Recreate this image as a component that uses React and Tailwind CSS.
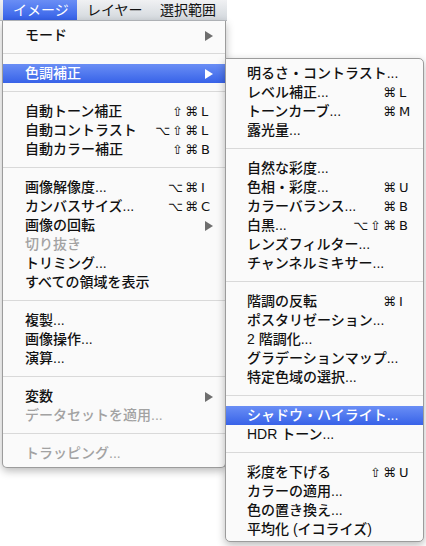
import React from "react";

const SEP = { sep: true };

const mainItems = [
  { l: "モード", arrow: true },
  SEP,
  { l: "色調補正", arrow: true, active: true },
  SEP,
  { l: "自動トーン補正", m: "⇧⌘", k: "L" },
  { l: "自動コントラスト", m: "⌥⇧⌘", k: "L" },
  { l: "自動カラー補正", m: "⇧⌘", k: "B" },
  SEP,
  { l: "画像解像度...", m: "⌥⌘", k: "I" },
  { l: "カンバスサイズ...", m: "⌥⌘", k: "C" },
  { l: "画像の回転", arrow: true },
  { l: "切り抜き", disabled: true },
  { l: "トリミング..." },
  { l: "すべての領域を表示" },
  SEP,
  { l: "複製..." },
  { l: "画像操作..." },
  { l: "演算..." },
  SEP,
  { l: "変数", arrow: true },
  { l: "データセットを適用...", disabled: true },
  SEP,
  { l: "トラッピング...", disabled: true },
];

const subItems = [
  { l: "明るさ・コントラスト..." },
  { l: "レベル補正...", m: "⌘", k: "L" },
  { l: "トーンカーブ...", m: "⌘", k: "M" },
  { l: "露光量..." },
  SEP,
  { l: "自然な彩度..." },
  { l: "色相・彩度...", m: "⌘", k: "U" },
  { l: "カラーバランス...", m: "⌘", k: "B" },
  { l: "白黒...", m: "⌥⇧⌘", k: "B" },
  { l: "レンズフィルター..." },
  { l: "チャンネルミキサー..." },
  SEP,
  { l: "階調の反転", m: "⌘", k: "I" },
  { l: "ポスタリゼーション..." },
  { l: "2 階調化..." },
  { l: "グラデーションマップ..." },
  { l: "特定色域の選択..." },
  SEP,
  { l: "シャドウ・ハイライト...", active: true },
  { l: "HDR トーン..." },
  SEP,
  { l: "彩度を下げる", m: "⇧⌘", k: "U" },
  { l: "カラーの適用..." },
  { l: "色の置き換え..." },
  { l: "平均化 (イコライズ)" },
];

function Row({ item, pl }) {
  if (item.sep) {
    return (
      <div className="h-[19px] flex flex-col">
        <div className="mt-[8px] h-px bg-[#d9d9d9]" />
      </div>
    );
  }
  const { l, m, k, arrow, disabled, active } = item;
  const color = active
    ? "bg-linear-to-b from-[#6a8ef5] to-[#3862e8] text-white"
    : disabled
    ? "text-[#a2a2a2]"
    : "text-[#111111]";
  return (
    <div className={`flex items-center h-[19px] pr-[12px] ${pl} ${color}`}>
      <span className="flex-1 whitespace-nowrap text-[14px] leading-[19px] font-medium">{l}</span>
      {k && (
        <span className="flex items-center font-['DejaVu_Sans',sans-serif] text-[13px] leading-[19px] font-medium">
          <span className="tracking-[2px] mr-[1px]">{m}</span>
          <span className="w-[12px]">{k}</span>
        </span>
      )}
      {arrow && (
        <svg width="8" height="10" viewBox="0 0 8 10">
          <path d="M0 0 L8 5 L0 10 Z" fill={active ? "#ffffff" : "#6e6e6e"} />
        </svg>
      )}
    </div>
  );
}

export default function App() {
  return (
    <div className="relative w-[426px] h-[546px] bg-white overflow-hidden font-['Liberation_Sans','Noto_Sans_CJK_JP',sans-serif]">
      <div className="flex w-[227px] h-[21px] bg-linear-to-b from-[#f0f1f3] to-[#d3d8dd] border-b border-[#b9bcc0] text-[14px] text-[#111]">
        <div className="w-[3px]" />
        <div className="w-[74px] pl-[10px] leading-[20px] text-white bg-linear-to-b from-[#6a8ef5] to-[#3560e8]">
          イメージ
        </div>
        <div className="w-[73px] pl-[10px] leading-[20px]">レイヤー</div>
        <div className="w-[76px] pl-[10px] leading-[20px]">選択範囲</div>
      </div>

      <div className="absolute left-[2px] top-[21px] w-[224px] pt-[5px] pb-[4px] bg-[#fafafa] border-x border-b border-[#9c9c9c] rounded-b-[5px] shadow-[0_3px_8px_rgba(0,0,0,0.28)]">
        {mainItems.map((it, i) => (
          <Row key={i} item={it} pl="pl-[22px]" />
        ))}
      </div>

      <div className="absolute left-[225px] top-[58px] w-[199px] pt-[5px] pb-[2px] bg-[#fafafa] border border-[#9c9c9c] rounded-tr-[5px] rounded-b-[5px] shadow-[0_3px_8px_rgba(0,0,0,0.28)]">
        {subItems.map((it, i) => (
          <Row key={i} item={it} pl="pl-[21px]" />
        ))}
      </div>
    </div>
  );
}
